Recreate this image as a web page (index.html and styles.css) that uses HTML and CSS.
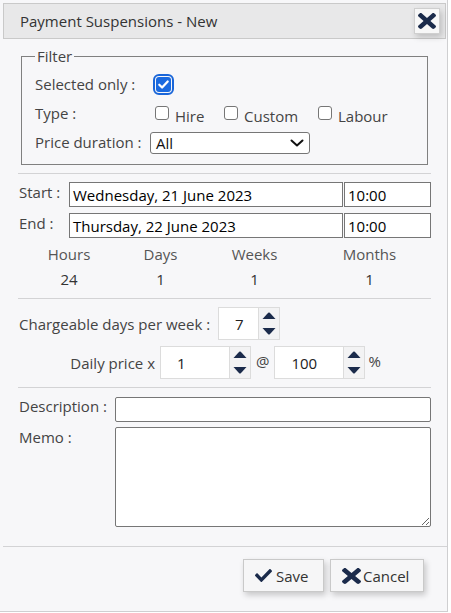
FILE: index.html
```html
<!DOCTYPE html>
<html>
<head>
<meta charset="utf-8">
<title>Payment Suspensions - New</title>
<link rel="stylesheet" href="styles.css">
</head>
<body>
<div class="dialog">
  <div class="titlebar">
    <span class="title">Payment Suspensions - New</span>
    <button class="close-btn" aria-label="Close">
      <svg class="icon-x" viewBox="0 80 352 352" preserveAspectRatio="none"><path d="M242.72 256l100.07-100.07c12.28-12.28 12.28-32.19 0-44.48l-22.24-22.24c-12.28-12.28-32.19-12.28-44.48 0L176 189.28 75.93 89.21c-12.28-12.28-32.19-12.28-44.48 0L9.21 111.45c-12.28 12.28-12.28 32.19 0 44.48L109.28 256 9.21 356.07c-12.28 12.28-12.28 32.19 0 44.48l22.24 22.24c12.28 12.28 32.2 12.28 44.48 0L176 322.72l100.07 100.07c12.28 12.28 32.2 12.28 44.48 0l22.24-22.24c12.28-12.28 12.28-32.19 0-44.48L242.72 256z"/></svg>
    </button>
  </div>

  <div class="content">
    <fieldset class="filter">
      <legend>Filter</legend>
      <div class="frow frow-selected">
        <span class="flabel">Selected only :</span>
        <span class="cb cb-checked"><svg viewBox="0 0 16 16"><path d="M3.5 8.2l3 3 6-6.4" fill="none" stroke="#fff" stroke-width="2.4" stroke-linecap="round" stroke-linejoin="round"/></svg></span>
      </div>
      <div class="frow frow-type">
        <span class="flabel flabel-type">Type :</span>
        <div class="types">
          <label class="type type-hire"><span class="cb"></span>Hire</label>
          <label class="type type-custom"><span class="cb"></span>Custom</label>
          <label class="type"><span class="cb"></span>Labour</label>
        </div>
      </div>
      <div class="frow frow-price">
        <span class="flabel flabel-price">Price duration :</span>
        <div class="select">
          <span>All</span>
          <svg class="chev" viewBox="0 0 14 8"><path d="M1.5 1.5l5.5 5 5.5-5" fill="none" stroke="#111" stroke-width="2" stroke-linecap="round" stroke-linejoin="round"/></svg>
        </div>
      </div>
    </fieldset>

    <div class="sep sep1"></div>

    <div class="drow drow-start">
      <span class="dlabel">Start :</span>
      <div class="field date">Wednesday, 21 June 2023</div>
      <div class="field time">10:00</div>
    </div>
    <div class="drow drow-end">
      <span class="dlabel">End :</span>
      <div class="field date">Thursday, 22 June 2023</div>
      <div class="field time">10:00</div>
    </div>

    <div class="stats">
      <span class="shead">Hours</span>
      <span class="shead">Days</span>
      <span class="shead">Weeks</span>
      <span class="shead">Months</span>
      <span class="sval">24</span>
      <span class="sval">1</span>
      <span class="sval">1</span>
      <span class="sval">1</span>
    </div>

    <div class="sep sep2"></div>

    <div class="prow prow-charge">
      <span class="plabel">Chargeable days per week :</span>
      <div class="spin">
        <span class="spin-val spin-val-short">7</span>
        <div class="spin-btns">
          <span class="spin-up"><svg viewBox="0 0 14 7"><path d="M0.5 7L6.2 0.8Q7 0 7.8 0.8L13.5 7Z"/></svg></span>
          <span class="spin-down"><svg viewBox="0 0 14 7"><path d="M0.5 0L6.2 6.2Q7 7 7.8 6.2L13.5 0Z"/></svg></span>
        </div>
      </div>
    </div>
    <div class="prow prow-daily">
      <span class="plabel plabel-daily">Daily price x</span>
      <div class="spin">
        <span class="spin-val">1</span>
        <div class="spin-btns">
          <span class="spin-up"><svg viewBox="0 0 14 7"><path d="M0.5 7L6.2 0.8Q7 0 7.8 0.8L13.5 7Z"/></svg></span>
          <span class="spin-down"><svg viewBox="0 0 14 7"><path d="M0.5 0L6.2 6.2Q7 7 7.8 6.2L13.5 0Z"/></svg></span>
        </div>
      </div>
      <span class="at">@</span>
      <div class="spin">
        <span class="spin-val">100</span>
        <div class="spin-btns">
          <span class="spin-up"><svg viewBox="0 0 14 7"><path d="M0.5 7L6.2 0.8Q7 0 7.8 0.8L13.5 7Z"/></svg></span>
          <span class="spin-down"><svg viewBox="0 0 14 7"><path d="M0.5 0L6.2 6.2Q7 7 7.8 6.2L13.5 0Z"/></svg></span>
        </div>
      </div>
      <span class="pct">%</span>
    </div>

    <div class="sep sep3"></div>

    <div class="mrow mrow-desc">
      <span class="mlabel">Description :</span>
      <input class="desc" type="text">
    </div>
    <div class="mrow mrow-memo">
      <span class="mlabel">Memo :</span>
      <textarea class="memo"></textarea>
    </div>
  </div>

  <div class="sep sep4"></div>

  <div class="actions">
    <button class="btn btn-save">
      <svg class="icon-check" viewBox="0 64 512 384" preserveAspectRatio="none"><path d="M173.898 439.404l-166.4-166.4c-9.997-9.997-9.997-26.206 0-36.204l36.203-36.204c9.997-9.998 26.207-9.998 36.204 0L192 312.690 432.095 72.596c9.997-9.997 26.207-9.997 36.204 0l36.203 36.204c9.997 9.997 9.997 26.206 0 36.204l-294.4 294.401c-9.998 9.997-26.207 9.997-36.204-.001z"/></svg>
      <span>Save</span>
    </button>
    <button class="btn btn-cancel">
      <svg class="icon-x2" viewBox="0 80 352 352" preserveAspectRatio="none"><path d="M242.72 256l100.07-100.07c12.28-12.28 12.28-32.19 0-44.48l-22.24-22.24c-12.28-12.28-32.19-12.28-44.48 0L176 189.28 75.93 89.21c-12.28-12.28-32.19-12.28-44.48 0L9.21 111.45c-12.28 12.28-12.28 32.19 0 44.48L109.28 256 9.21 356.07c-12.28 12.28-12.28 32.19 0 44.48l22.24 22.24c12.28 12.28 32.2 12.28 44.48 0L176 322.72l100.07 100.07c12.28 12.28 32.2 12.28 44.48 0l22.24-22.24c12.28-12.28 12.28-32.19 0-44.48L242.72 256z"/></svg>
      <span>Cancel</span>
    </button>
  </div>
</div>
</body>
</html>
```

FILE: styles.css
```css
* {
  box-sizing: border-box;
}

html {
  background: #ffffff;
}

body {
  margin: 0;
  font-family: "Open Sans", "DejaVu Sans", sans-serif;
  font-size: 15px;
  line-height: 20px;
  color: #444;
}

.dialog {
  width: 448px;
  height: 612px;
  background: #f7f7f9;
  border-right: 1px solid #cfcfd1;
  border-bottom: 1px solid #cfcfd1;
  padding-top: 3px;
  display: flex;
  flex-direction: column;
}

/* Title bar */
.titlebar {
  height: 36px;
  margin: 0 1px 0 3px;
  border: 1px solid #c9c9c9;
  background: #e8e8e9;
  display: flex;
  align-items: center;
  justify-content: space-between;
  padding: 0 5px 0 16px;
}

.title {
  color: #333;
  font-size: 15px;
}

.close-btn {
  width: 26px;
  height: 26px;
  padding: 0;
  margin: 0;
  border: 1px solid #cfcfcf;
  background: #f7f7f7;
  box-shadow: 2px 3px 6px rgba(0, 0, 0, 0.18);
  display: flex;
  align-items: center;
  justify-content: center;
}

.icon-x {
  width: 18px;
  height: 16px;
  fill: #1b2b4b;
}

/* Content */
.content {
  padding: 0 16px 0 18px;
}

.filter {
  margin: 8px 3px 0;
  border: 1px solid #808080;
  padding: 4px 8px 8px 13px;
  min-width: 0;
}

.filter legend {
  padding: 0 2px;
  line-height: 18px;
  color: #444;
}

.frow {
  display: flex;
  height: 29px;
  align-items: flex-start;
}

.flabel {
  width: 115px;
  flex: none;
}

.frow-selected {
  align-items: center;
}

.cb {
  display: inline-block;
  width: 14px;
  height: 14px;
  border: 1px solid #767676;
  border-radius: 3px;
  background: #fff;
  flex: none;
}

.cb-checked {
  width: 15px;
  height: 15px;
  margin-left: 6px;
  margin-top: 2px;
  border: none;
  background: #1a6ae0;
  outline: 2px solid #1a66d9;
  outline-offset: 1px;
  display: flex;
}

.cb-checked svg {
  width: 15px;
  height: 15px;
}

.flabel-type {
  padding-top: 5px;
}

.types {
  display: flex;
  margin-left: 5px;
  margin-top: 8px;
}

.type {
  display: flex;
  align-items: flex-start;
  gap: 6px;
  color: #444;
}

.type-hire {
  width: 69px;
}

.type-custom {
  width: 94px;
}

.flabel-price {
  padding-top: 5px;
}

.select {
  width: 160px;
  height: 22px;
  margin-top: 5px;
  border: 1px solid #767676;
  border-radius: 3px;
  background: #fff;
  display: flex;
  align-items: center;
  justify-content: space-between;
  padding: 0 5px 0 5px;
  color: #111;
}

.chev {
  width: 14px;
  height: 8px;
}

.sep {
  height: 1px;
  background: #d3d3d5;
}

.sep1 {
  margin-top: 8px;
}

/* Dates */
.drow {
  display: flex;
  align-items: flex-start;
  gap: 1px;
}

.drow-start {
  margin-top: 8px;
}

.drow-end {
  margin-top: 6px;
}

.dlabel {
  width: 50px;
  padding-left: 1px;
  flex: none;
}

.field {
  height: 25px;
  border: 1px solid #767676;
  background: #fff;
  color: #000;
  padding: 1.5px 3px;
  white-space: nowrap;
}

.date {
  width: 274px;
}

.time {
  width: 87px;
}

.stats {
  display: grid;
  grid-template-columns: 102px 81px 107px 123px;
  margin-top: 6px;
  row-gap: 5px;
  text-align: center;
}

.shead {
  color: #555;
}

.sval {
  color: #333;
}

.sep2 {
  margin-top: 9px;
}

/* Spinners */
.prow {
  display: flex;
  align-items: center;
}

.prow-charge {
  margin-top: 8px;
}

.prow-daily {
  margin-top: 6px;
}

.plabel {
  padding-left: 1px;
  width: 200px;
  flex: none;
}

.plabel-daily {
  width: 137px;
  text-align: right;
  margin-right: 5px;
}

.spin {
  display: flex;
  height: 33px;
  border: 1px solid #dcdcdc;
  background: #fff;
  flex: none;
}

.spin-val {
  width: 68px;
  padding-left: 16px;
  display: flex;
  align-items: center;
  color: #222;
}

.spin-val-short {
  width: 39px;
}

.spin-btns {
  width: 21px;
  border-left: 1px solid #dcdcdc;
  background: #f3f3f4;
  display: flex;
  flex-direction: column;
}

.spin-up,
.spin-down {
  flex: 1;
  display: flex;
  align-items: center;
  justify-content: center;
}

.spin-up svg,
.spin-down svg {
  width: 14px;
  height: 7px;
  fill: #1b2b4b;
}

.at {
  margin: 0 5px 0 5px;
  color: #444;
  padding-bottom: 4px;
}

.pct {
  margin-left: 3px;
  color: #444;
  padding-bottom: 4px;
}

.sep3 {
  margin-top: 8px;
}

/* Description / memo */
.mrow {
  display: flex;
  align-items: flex-start;
}

.mrow-desc {
  margin-top: 9px;
}

.mrow-memo {
  margin-top: 5px;
}

.mlabel {
  width: 97px;
  padding-left: 1px;
  flex: none;
}

.mrow-desc .mlabel {
  margin-top: -1px;
}

.desc {
  width: 316px;
  height: 25px;
  margin: 0;
  border: 1px solid #767676;
  border-radius: 2px;
  background: #fff;
  font: inherit;
}

.memo {
  width: 316px;
  height: 100px;
  margin: 0;
  border: 1px solid #767676;
  border-radius: 2px;
  background: #fff;
  font: inherit;
  display: block;
}

.sep4 {
  margin: 19px 0 0 3px;
}

/* Actions */
.actions {
  display: flex;
  justify-content: flex-end;
  gap: 6px;
  padding-right: 23px;
  margin-top: 12px;
}

.btn {
  height: 33px;
  margin: 0;
  border: 1px solid #c9c9c9;
  background: #f6f6f7;
  box-shadow: 2px 3px 6px rgba(0, 0, 0, 0.2);
  font-family: inherit;
  font-size: 15px;
  color: #333;
  display: flex;
  align-items: center;
  padding: 0 0 0 11px;
}

.btn-save {
  width: 81px;
  gap: 4px;
}

.btn-cancel {
  width: 94px;
  gap: 2px;
}

.icon-check {
  width: 17px;
  height: 13px;
  fill: #1b2b4b;
}

.icon-x2 {
  width: 19px;
  height: 16px;
  fill: #1b2b4b;
}
```
